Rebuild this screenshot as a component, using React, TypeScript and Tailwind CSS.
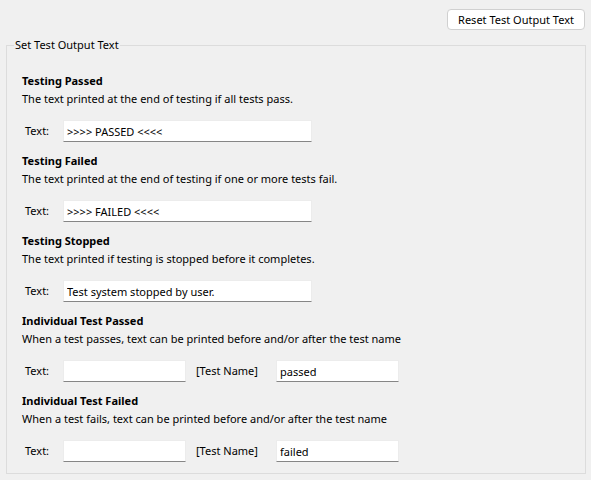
import React from 'react';

const font = { fontFamily: '"Segoe UI", "Noto Sans", sans-serif' };

function Field({ value, wide }: { value: string; wide?: boolean }) {
  return (
    <input
      readOnly
      value={value}
      className={
        (wide ? 'w-[249px]' : 'w-[123px]') +
        ' h-[22px] bg-white border border-[#ececec] border-b-[#868686] pl-[3px] text-[11px] text-black outline-none'
      }
    />
  );
}

function Section({
  title,
  desc,
  children,
}: {
  title: string;
  desc: string;
  children: React.ReactNode;
}) {
  return (
    <div className="flex flex-col pb-[10px]">
      <div className="h-[18px] leading-[18px] font-bold">{title}</div>
      <div className="h-[18px] leading-[18px]">{desc}</div>
      <div className="mt-[12px] flex items-center h-[22px]">
        <div className="w-[41px] pl-[3px]">Text:</div>
        {children}
      </div>
    </div>
  );
}

const single = [
  {
    title: 'Testing Passed',
    desc: 'The text printed at the end of testing if all tests pass.',
    value: '>>>> PASSED <<<<',
  },
  {
    title: 'Testing Failed',
    desc: 'The text printed at the end of testing if one or more tests fail.',
    value: '>>>> FAILED <<<<',
  },
  {
    title: 'Testing Stopped',
    desc: 'The text printed if testing is stopped before it completes.',
    value: 'Test system stopped by user.',
  },
];

const individual = [
  {
    title: 'Individual Test Passed',
    desc: 'When a test passes, text can be printed before and/or after the test name',
    value: 'passed',
  },
  {
    title: 'Individual Test Failed',
    desc: 'When a test fails, text can be printed before and/or after the test name',
    value: 'failed',
  },
];

export default function App() {
  return (
    <div className="w-[591px] h-[480px] bg-[#f0f0f0] text-[11px] text-black" style={font}>
      <div className="flex justify-end pt-[9px] pr-[6px]">
        <button className="h-[21px] w-[138px] rounded-[4px] border border-[#d0d0d0] bg-white text-[11px] leading-[18px]">
          Reset Test Output Text
        </button>
      </div>
      <fieldset className="mt-[7px] ml-[6px] mr-[5px] h-[437px] border border-[#dcdcdc]">
        <legend className="ml-[7px] px-[1px] leading-[16px]">Set Test Output Text</legend>
        <div className="pl-[15px] pt-[19px]">
          {single.map((s) => (
            <Section key={s.title} title={s.title} desc={s.desc}>
              <Field value={s.value} wide />
            </Section>
          ))}
          {individual.map((s) => (
            <Section key={s.title} title={s.title} desc={s.desc}>
              <Field value="" />
              <div className="w-[90px] pl-[10px]">[Test Name]</div>
              <Field value={s.value} />
            </Section>
          ))}
        </div>
      </fieldset>
    </div>
  );
}
